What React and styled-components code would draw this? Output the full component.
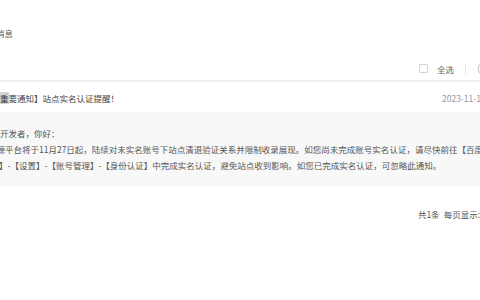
import styled, { createGlobalStyle } from "styled-components";

const GlobalStyle = createGlobalStyle`
  html, body {
    margin: 0;
    padding: 0;
    background: #fff;
    overflow: hidden;
  }
  body {
    font-family: "Noto Sans CJK SC", "Liberation Sans", sans-serif;
    font-size: 8.5px;
    color: #555;
  }
`;

const Page = styled.div`
  width: 560px;
  margin-left: -20px;
`;

const Header = styled.div`
  padding: 27px 16px 0;
  line-height: 12px;
  color: #555;
`;

const Toolbar = styled.div`
  display: flex;
  align-items: center;
  justify-content: flex-end;
  height: 23px;
  margin-top: 18px;
  padding-right: 31px;
  color: #666;
`;

const Check = styled.span`
  width: 7px;
  height: 7px;
  border: 1px solid #d4d4d4;
  border-radius: 1px;
  background: #fff;
  margin-right: 9px;
`;

const Divider = styled.span`
  width: 1px;
  height: 11px;
  background: #e8e8e8;
  margin: 0 12px 0 11px;
`;

const ToolItem = styled.span`
  display: flex;
  align-items: center;
  gap: 4px;
`;

const Separator = styled.div`
  height: 2px;
  background: #f2f2f2;
`;

const Row = styled.div`
  display: grid;
  grid-template-columns: 1fr 90px;
  padding: 10px 8px 8px 11.5px;
  line-height: 12px;
`;

const Title = styled.span`
  color: #444;
  white-space: nowrap;
`;

const Mark = styled.span`
  background: #d4d4d4;
  color: #333;
`;

const Time = styled.span`
  color: #999;
  white-space: nowrap;
`;

const Body = styled.div`
  background: #f8f8f8;
  padding: 13px 0 14px 20px;
  line-height: 16px;
  color: #555;
`;

const Line = styled.div`
  white-space: nowrap;
  margin-left: ${(p) => p.$shift || 0}px;
`;

const Footer = styled.div`
  display: flex;
  justify-content: flex-end;
  align-items: center;
  gap: 4px;
  margin-top: 19px;
  padding-right: 10px;
  line-height: 12px;
  color: #555;
`;

const Select = styled.span`
  width: 44px;
  height: 14px;
  border: 1px solid #ddd;
`;

export default function App() {
  return (
    <>
      <GlobalStyle />
      <Page>
        <Header>消息</Header>
        <Toolbar>
          <Check />
          <span>全选</span>
          <Divider />
          <ToolItem>
            <svg width="10" height="10" viewBox="0 0 10 10">
              <rect x="0.5" y="0.5" width="9" height="9" rx="3" fill="none" stroke="#bbb" />
            </svg>
            <span>删除</span>
          </ToolItem>
        </Toolbar>
        <Separator />
        <Row>
          <Title>
            <Mark>【重</Mark>要通知】站点实名认证提醒！
          </Title>
          <Time>2023-11-13 15:20</Time>
        </Row>
        <Body>
          <Line>开发者，你好：</Line>
          <Line $shift={-12}>
            资源平台将于11月27日起，陆续对未实名账号下站点清退验证关系并限制收录展现。如您尚未完成账号实名认证，请尽快前往【百度搜索
          </Line>
          <Line $shift={-1}>
            】-【设置】-【账号管理】-【身份认证】中完成实名认证，避免站点收到影响。如您已完成实名认证，可忽略此通知。
          </Line>
        </Body>
        <Footer>
          <span>共1条</span>
          <span>每页显示:</span>
          <Select />
        </Footer>
      </Page>
    </>
  );
}
